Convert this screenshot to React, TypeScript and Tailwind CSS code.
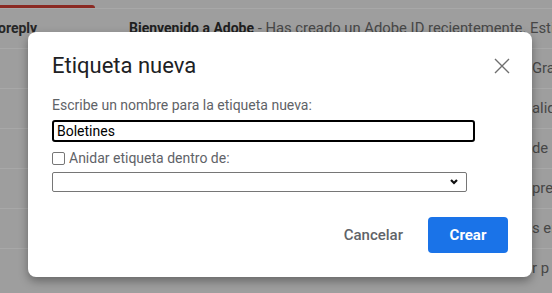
const rows = ['Gra', 'alid', 'de D', 'pren', 's en', 'r p']

const CloseIcon = () => (
  <svg width="16" height="16" viewBox="0 0 16 16" className="text-[#6f6f6f]">
    <path d="M1 1 L15 15 M15 1 L1 15" stroke="currentColor" strokeWidth="1.4" fill="none" />
  </svg>
)

export default function App() {
  return (
    <div className="relative w-[552px] h-[293px] overflow-hidden bg-[#9e9e9e] font-['Roboto',sans-serif] text-[14px]">
      <div className="h-[8px] pt-[5px]">
        <div className="h-[3px] w-[95px] rounded-tr-[3px] bg-[#8b2a23]" />
      </div>

      <div className="h-[40px] border-t border-[#a8a8a8] flex items-center whitespace-nowrap">
        <span className="-ml-[2px] w-[131px] shrink-0 font-bold text-[#262626]">oreply</span>
        <span className="shrink-0 font-bold text-[#1e1e1e]">Bienvenido a Adobe</span>
        <span className="shrink-0 text-[14.8px] text-[#474747]">&nbsp;- Has creado un Adobe ID recientemente. Estimado</span>
      </div>
      {rows.map((t) => (
        <div key={t} className="h-[40px] border-t border-[#a8a8a8] flex items-center whitespace-nowrap">
          <span className="ml-[532px] shrink-0 text-[14.8px] text-[#474747]">{t}</span>
        </div>
      ))}

      <div className="absolute left-[28px] top-[32px] w-[504px] h-[245px] rounded-[8px] bg-white shadow-[0_4px_10px_rgba(0,0,0,0.35)] pl-[24px] pr-[24px] pt-[20px] flex flex-col">
        <div className="flex items-start justify-between">
          <h2 className="text-[22px] leading-[28px] text-[#202124]">Etiqueta nueva</h2>
          <button className="mt-[6px] -mr-[2px]">
            <CloseIcon />
          </button>
        </div>

        <p className="mt-[15px] leading-[20px] text-[#5f6368]">Escribe un nombre para la etiqueta nueva:</p>
        <input
          defaultValue="Boletines"
          className="mt-[5px] w-[423px] h-[22px] rounded-[3px] border-2 border-black px-[3px] text-[14px] text-black outline-none"
        />

        <label className="mt-[6px] h-[20px] flex items-center gap-[4px] text-[#5f6368]">
          <span className="w-[13px] h-[13px] rounded-[2px] border border-[#767676] bg-white" />
          Anidar etiqueta dentro de:
        </label>

        <div className="relative mt-[4px] w-[415px] h-[20px] rounded-[2px] border border-[#767676]">
          <svg width="8" height="6" viewBox="0 0 8 6" className="absolute right-[8px] top-[6px]">
            <path d="M1 1 L4 4 L7 1" stroke="#111" strokeWidth="2.2" fill="none" />
          </svg>
        </div>

        <div className="mt-[25px] flex items-center justify-end">
          <button className="mr-[25px] text-[15px] font-medium text-[#5f6368]">Cancelar</button>
          <button className="w-[80px] h-[36px] rounded-[4px] bg-[#1a73e8] text-[15px] font-bold text-white">Crear</button>
        </div>
      </div>
    </div>
  )
}
